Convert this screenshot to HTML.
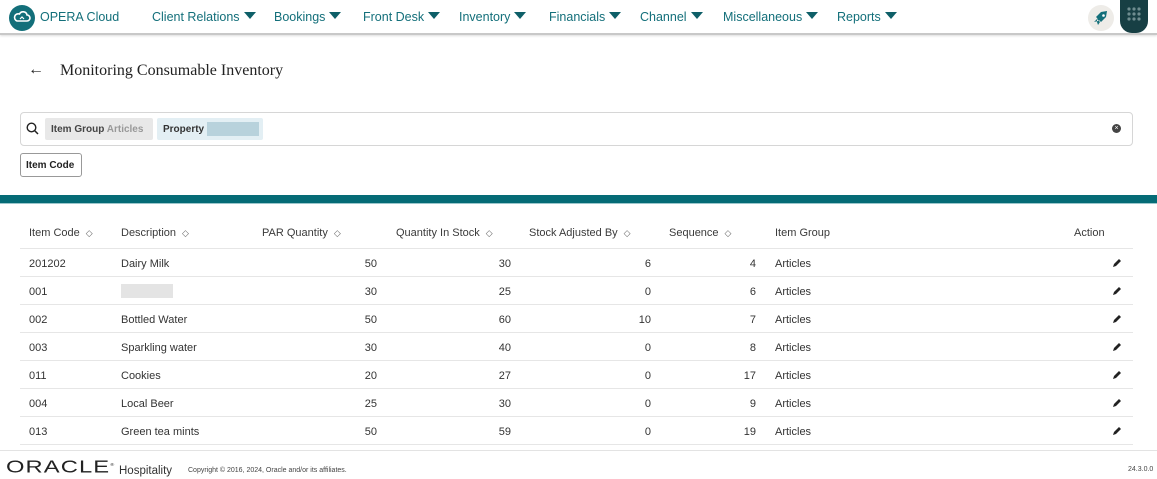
<!DOCTYPE html>
<html><head><meta charset="utf-8"><style>
*{box-sizing:border-box;margin:0;padding:0}
body{width:1157px;height:479px;background:#fff;font-family:"Liberation Sans",sans-serif;color:#333;position:relative;overflow:hidden;font-size:11px}
.nav{position:absolute;left:0;top:0;width:1157px;height:35px;border-bottom:2px solid #c8c8c8;background:#fff;box-shadow:0 1px 2px #ddd}
.nav .i{position:absolute;top:10px;font-size:12.5px;color:#136f7a}
.nav .i:after{content:"";display:inline-block;margin-left:4px;border-left:6px solid transparent;border-right:6px solid transparent;border-top:7px solid #0e5f68;vertical-align:2px}
.a{position:absolute}
.th{position:absolute;top:227px;font-size:11px;color:#3a3a3a}
.row{position:absolute;left:20px;width:1113px;height:28px;border-bottom:1px solid #e6e6e6}
.c{position:absolute;top:9px;font-size:11px;color:#333}
.r{text-align:right}
.srt{display:inline-block;margin-left:6px;font-size:9px;color:#666}
</style></head><body>
<div class="nav">
 <div class="a" style="left:9px;top:5px;width:26px;height:26px;border-radius:50%;background:#136f7a"><svg width="26" height="26" viewBox="0 0 26 26"><path d="M8 16h10a3 3 0 0 0 0-6 4 4 0 0 0-7.5-1A3.5 3.5 0 0 0 8 16z" fill="none" stroke="#fff" stroke-width="1.6"/><path d="M11 14l2-2 2 2" stroke="#fff" fill="none" stroke-width="1.2"/></svg></div>
 <div class="a" style="left:40px;top:10px;font-size:12.5px;color:#136f7a">OPERA Cloud</div>
 <div class="i" style="left:152px">Client Relations</div>
 <div class="i" style="left:274px">Bookings</div>
 <div class="i" style="left:363px">Front Desk</div>
 <div class="i" style="left:459px">Inventory</div>
 <div class="i" style="left:549px">Financials</div>
 <div class="i" style="left:640px">Channel</div>
 <div class="i" style="left:723px">Miscellaneous</div>
 <div class="i" style="left:837px">Reports</div>
 <div class="a" style="left:1088px;top:5px;width:26px;height:26px;border-radius:50%;background:#eeece8"><svg width="26" height="26" viewBox="0 0 26 26"><path d="M6 17l4-1 6-6 3-4-4 2-6 6z M9 14l3 3-2 3-1-3z" fill="#136f7a"/><path d="M8 12l5-5 6-1-1 6-5 5z" fill="#136f7a"/><circle cx="15.5" cy="10.5" r="1.3" fill="#fff"/></svg></div>
 <div class="a" style="left:1120px;top:-4px;width:28px;height:37px;border-radius:0 0 12px 12px;background:#173f44"><svg width="28" height="37"><g fill="#6f8d90"><circle cx="9" cy="13" r="1.6"/><circle cx="14" cy="13" r="1.6"/><circle cx="19" cy="13" r="1.6"/><circle cx="9" cy="18" r="1.6"/><circle cx="14" cy="18" r="1.6"/><circle cx="19" cy="18" r="1.6"/><circle cx="9" cy="23" r="1.6"/><circle cx="14" cy="23" r="1.6"/><circle cx="19" cy="23" r="1.6"/></g></svg></div>
</div>
<div class="a" style="left:28px;top:61px;font-size:16px;color:#222">←</div>
<div class="a" style="left:60px;top:62px;font-family:'Liberation Serif',serif;font-size:16px;color:#222">Monitoring Consumable Inventory</div>
<div class="a" style="left:20px;top:112px;width:1113px;height:34px;border:1px solid #d6d6d6;border-radius:4px"></div>
<svg class="a" style="left:26px;top:122px" width="13" height="13"><circle cx="5.5" cy="5.5" r="4.3" fill="none" stroke="#222" stroke-width="1.4"/><path d="M8.5 8.5l3.5 3.5" stroke="#222" stroke-width="1.5"/></svg>
<div class="a" style="left:45px;top:118px;width:108px;height:22px;background:#e8e8e8;border-radius:2px;padding:6px 0 0 6px;font-size:10px;color:#444;font-weight:bold">Item Group <span style="color:#999">Articles</span></div>
<div class="a" style="left:157px;top:118px;width:106px;height:22px;background:#e3eff4;border-radius:2px;padding:6px 0 0 6px;font-size:10px;color:#333;font-weight:bold">Property</div>
<div class="a" style="left:207px;top:122px;width:52px;height:14px;background:#b8d2dc"></div>
<div class="a" style="left:1112px;top:124px;width:9px;height:9px;border-radius:50%;background:#444;color:#fff;font-size:7px;line-height:9px;text-align:center">×</div>
<div class="a" style="left:20px;top:153px;width:62px;height:24px;border:1px solid #999;border-radius:3px;font-size:10px;font-weight:bold;color:#222;padding:6px 0 0 5px">Item Code</div>
<div class="a" style="left:0;top:195px;width:1157px;height:9px;background:#056b76;border-bottom:1px solid #9cc7cc"></div>
<div class="row" style="top:221px"></div>
<div class="th" style="left:29px">Item Code<span class="srt">◇</span></div>
<div class="th" style="left:121px">Description<span class="srt">◇</span></div>
<div class="th" style="left:262px">PAR Quantity<span class="srt">◇</span></div>
<div class="th" style="left:396px">Quantity In Stock<span class="srt">◇</span></div>
<div class="th" style="left:529px">Stock Adjusted By<span class="srt">◇</span></div>
<div class="th" style="left:669px">Sequence<span class="srt">◇</span></div>
<div class="th" style="left:775px">Item Group</div>
<div class="th" style="left:1074px">Action</div>
<div id="rows"></div>
<script>
var d=[["201202","Dairy Milk",50,30,6,4],["001","",30,25,0,6],["002","Bottled Water",50,60,10,7],["003","Sparkling water",30,40,0,8],["011","Cookies",20,27,0,17],["004","Local Beer",25,30,0,9],["013","Green tea mints",50,59,0,19]];
var h="";d.forEach(function(r,i){var t=249+i*28;
h+='<div class="row" style="top:'+t+'px"><div class="c" style="left:9px">'+r[0]+'</div><div class="c" style="left:101px">'+(r[1]||'<span style="display:inline-block;width:52px;height:14px;margin-top:-2px;background:#e4e4e4"></span>')+'</div><div class="c r" style="left:257px;width:100px">'+r[2]+'</div><div class="c r" style="left:391px;width:100px">'+r[3]+'</div><div class="c r" style="left:531px;width:100px">'+r[4]+'</div><div class="c r" style="left:636px;width:100px">'+r[5]+'</div><div class="c" style="left:755px">Articles</div><svg style="position:absolute;left:1092px;top:9px" width="10" height="10"><path d="M1 9l1-3 5-5 2 2-5 5z" fill="#222"/></svg></div>';});
document.getElementById("rows").innerHTML=h;
</script>
<div class="a" style="left:0;top:450px;width:1157px;border-top:1px solid #e3e3e3"></div>
<div class="a" style="left:6px;top:457px;font-size:22px;letter-spacing:1px;color:#222;transform:scale(1.08,0.78);transform-origin:left top">ORACLE<sup style="font-size:5px">®</sup></div>
<div class="a" style="left:119px;top:465px;font-size:11.5px;color:#333">Hospitality</div>
<div class="a" style="left:188px;top:467px;font-size:7px;color:#444">Copyright © 2016, 2024, Oracle and/or its affiliates.</div>
<div class="a" style="left:1128px;top:466px;font-size:7px;color:#444">24.3.0.0</div>
</body></html>
